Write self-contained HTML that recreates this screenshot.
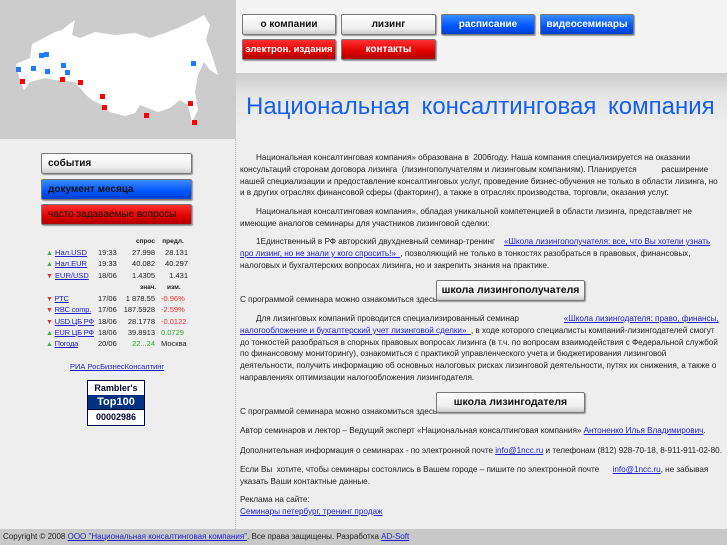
<!DOCTYPE html>
<html><head><meta charset="utf-8">
<style>
*{margin:0;padding:0;box-sizing:border-box}
body{width:727px;height:545px;overflow:hidden;background:#eee;font-family:"Liberation Sans","DejaVu Sans",sans-serif;font-size:8.2px;color:#222;position:relative}
a{color:#22c}
.abs{position:absolute}
.btn{position:absolute;height:21px;border:1px solid #777;border-radius:2px;font-weight:bold;font-size:10px;text-align:center;line-height:19px;box-shadow:1px 1px 1px #999}
.w{background:linear-gradient(#fff,#eee 70%,#ccc);color:#111}
.b{background:linear-gradient(#3a8cff,#0055ff 60%,#0040d0);color:#fff}
.r{background:linear-gradient(#ff3030,#e00000 60%,#b00000);color:#fff}
.lb{text-align:left;padding-left:6px;color:#111}
.p{position:absolute;left:240px;width:482px;line-height:11.8px;letter-spacing:-0.03px}
.q{position:absolute;font-size:7.5px;line-height:11.3px}
.q div{height:11.3px;line-height:11.3px;white-space:nowrap}
.up{color:#4a4;font-size:7px;line-height:11px}
.dn{color:#d33;font-size:7px;line-height:11px}
</style></head><body>
<div class="abs" style="left:0;top:0;width:236px;height:139px;background:#ccc"></div>
<svg class="abs" style="left:0;top:0" width="236" height="139" viewBox="0 0 236 139">
<path d="M16,64 L30,58 L32,44 L40,40 L55,32 L62,30 L68,25 L75,20 L72,35 L80,38 L95,32 L115,35 L135,33 L150,38 L165,33 L180,27 L195,20 L204,15 L210,25 L206,40 L212,55 L218,75 L210,70 L204,62 L198,75 L195,92 L198,110 L192,122 L188,105 L180,100 L170,108 L158,112 L140,105 L135,113 L125,116 L110,112 L100,104 L92,100 L86,95 L75,82 L55,80 L45,78 L30,82 L24,90 L20,80 Z" fill="#fff"/>
<g fill="#1e7cff"><rect x="39" y="53" width="5" height="5"/><rect x="44" y="52" width="5" height="5"/><rect x="16" y="67" width="5" height="5"/><rect x="31" y="66" width="5" height="5"/><rect x="45" y="69" width="5" height="5"/><rect x="61" y="63" width="5" height="5"/><rect x="65" y="70" width="5" height="5"/><rect x="191" y="61" width="5" height="5"/></g>
<g fill="#f00"><rect x="20" y="79" width="5" height="5"/><rect x="60" y="77" width="5" height="5"/><rect x="78" y="80" width="5" height="5"/><rect x="100" y="94" width="5" height="5"/><rect x="102" y="105" width="5" height="5"/><rect x="144" y="113" width="5" height="5"/><rect x="188" y="101" width="5" height="5"/><rect x="192" y="120" width="5" height="5"/></g>
</svg>
<div class="abs" style="left:235px;top:139px;height:390px;border-left:1px dotted #bbb"></div>
<div class="abs" style="left:236px;top:0;width:491px;height:73px;background:#f4f4f4"></div>
<div class="abs" style="left:236px;top:73px;width:491px;height:55px;background:linear-gradient(#cbcbcb,#e6e6e6 40%,#eee)"></div>
<div class="abs" style="left:246px;top:93px;font-size:24px;color:#1560f0;word-spacing:5px;white-space:nowrap">Национальная консалтинговая компания</div>

<div class="btn w" style="left:242px;top:14px;width:94px">о компании</div>
<div class="btn w" style="left:341px;top:14px;width:95px">лизинг</div>
<div class="btn b" style="left:441px;top:14px;width:94px">расписание</div>
<div class="btn b" style="left:540px;top:14px;width:94px">видеосеминары</div>
<div class="btn r" style="left:242px;top:39px;width:94px;font-size:9.5px">электрон. издания</div>
<div class="btn r" style="left:341px;top:39px;width:95px">контакты</div>

<div class="btn w lb" style="left:41px;top:153px;width:151px">события</div>
<div class="btn b lb" style="left:41px;top:179px;width:151px">документ месяца</div>
<div class="btn r lb" style="left:41px;top:204px;width:151px;font-weight:normal">часто задаваемые вопросы</div>

<div class="q" style="left:136px;top:236px;font-weight:bold;font-size:6.5px">спрос &nbsp; &nbsp;предл.</div>
<div class="q" style="left:46px;top:247px;width:50px">
<div><span class="up">▲</span> <a href="#">Нал.USD</a></div>
<div><span class="up">▲</span> <a href="#">Нал.EUR</a></div>
<div><span class="dn">▼</span> <a href="#">EUR/USD</a></div>
</div>
<div class="q" style="left:98px;top:247px">19:33<br>19:33<br>18/06</div>
<div class="q" style="left:124px;top:247px;text-align:right;width:31px">27.998<br>40.082<br>1.4305</div>
<div class="q" style="left:158px;top:247px;text-align:right;width:30px">28.131<br>40.297<br>1.431</div>
<div class="q" style="left:140px;top:282px;font-weight:bold;font-size:6.5px">знач. &nbsp; &nbsp; &nbsp;изм.</div>
<div class="q" style="left:46px;top:293px;width:52px;letter-spacing:-0.2px">
<div><span class="dn">▼</span> <a href="#">РТС</a></div>
<div><span class="dn">▼</span> <a href="#">RBC comp.</a></div>
<div><span class="dn">▼</span> <a href="#">USD ЦБ РФ</a></div>
<div><span class="up">▲</span> <a href="#">EUR ЦБ РФ</a></div>
<div><span class="up">▲</span> <a href="#">Погода</a></div>
</div>
<div class="q" style="left:98px;top:293px">17/06<br>17/06<br>18/06<br>18/06<br>20/06</div>
<div class="q" style="left:118px;top:293px;text-align:right;width:37px">1 878.55<br>187.5928<br>28.1778<br>39.8913<br><span style="color:#3a3">22...24</span></div>
<div class="q" style="left:161px;top:293px"><span style="color:#e33">-0.96%<br>-2.59%<br>-0.0122</span><br><span style="color:#3a3">0.0729</span><br>Москва</div>
<div class="q" style="left:70px;top:361px"><a href="#">РИА РосБизнесКонсалтинг</a></div>
<div class="abs" style="left:87px;top:380px;width:58px;height:46px;border:1px solid #004;background:#fff;font-weight:bold;text-align:center;color:#003;font-size:9px;line-height:14px">
<div>Rambler's</div><div style="background:#003080;color:#fff;font-size:11px">Top100</div><div style="border-top:1px solid #003">00002986</div></div>

<div class="p" style="top:152px;text-indent:16px">Национальная консалтинговая компания» образована в &nbsp;2006году. Наша компания специализируется на оказании консультаций сторонам договора лизинга &nbsp;(лизингополучателям и лизинговым компаниям). Планируется &nbsp; &nbsp; &nbsp; &nbsp; &nbsp; расширение нашей специализации и предоставление консалтинговых услуг, проведение бизнес-обучения не только в области лизинга, но и в других отраслях финансовой сферы (факторинг), а также в отраслях производства, торговли, оказания услуг.</div>
<div class="p" style="top:206px;text-indent:16px">Национальная консалтинговая компания», обладая уникальной компетенцией в области лизинга, представляет не имеющие аналогов семинары для участников лизинговой сделки:</div>
<div class="p" style="top:236px;text-indent:16px">1Единственный в РФ авторский двухдневный семинар-тренинг &nbsp; &nbsp;<a href="#">«Школа лизингополучателя: все, что Вы хотели узнать про лизинг, но не знали у кого спросить!» &nbsp;</a>, позволяющий не только в тонкостях разобраться в правовых, финансовых, налоговых и бухгалтерских вопросах лизинга, но и закрепить знания на практике.</div>
<div class="p" style="top:294px">С программой семинара можно ознакомиться здесь</div>
<div class="btn w" style="left:436px;top:280px;width:149px;font-size:10.5px">школа лизингополучателя</div>
<div class="p" style="top:313px;text-indent:16px">Для лизинговых компаний проводится специализированный семинар &nbsp; &nbsp; &nbsp; &nbsp; &nbsp; &nbsp; &nbsp; &nbsp; &nbsp; &nbsp;<a href="#">«Школа лизингодателя: право, финансы, налогообложение и бухгалтерский учет лизинговой сделки» &nbsp;</a>, в ходе которого специалисты компаний-лизингодателей смогут до тонкостей разобраться в спорных правовых вопросах лизинга (в т.ч. по вопросам взаимодействия с Федеральной службой по финансовому мониторингу), ознакомиться с практикой управленческого учета и бюджетирования лизинговой деятельности, получить информацию об основных налоговых рисках лизинговой деятельности, путях их снижения, а также о направлениях оптимизации налогообложения лизингодателя.</div>
<div class="p" style="top:406px">С программой семинара можно ознакомиться здесь</div>
<div class="btn w" style="left:436px;top:392px;width:149px;font-size:10.5px">школа лизингодателя</div>
<div class="p" style="top:425px;white-space:nowrap">Автор семинаров и лектор – Ведущий эксперт «Национальная консалтинговая компания» <a href="#">Антоненко Илья Владимирович</a>.</div>
<div class="p" style="top:445px;white-space:nowrap">Дополнительная информация о семинарах - по электронной почте <a href="#">info@1ncc.ru</a> и телефонам (812) 928-70-18, 8-911-911-02-80.</div>
<div class="p" style="top:464px">Если Вы &nbsp;хотите, чтобы семинары состоялись в Вашем городе – пишите по электронной почте &nbsp; &nbsp; &nbsp;<a href="#">info@1ncc.ru</a>, не забывая указать Ваши контактные данные.</div>
<div class="p" style="top:494px">Реклама на сайте:<br><a href="#">Семинары петербург, тренинг продаж</a></div>

<div class="abs" style="left:0;top:529px;width:727px;height:16px;background:#c8c8c8;padding:3px 0 0 3px;font-size:8px;line-height:10px">Copyright © 2008 <a href="#">ООО "Национальная консалтинговая компания"</a>. Все права защищены. Разработка <a href="#">AD-Soft</a></div>
</body></html>
